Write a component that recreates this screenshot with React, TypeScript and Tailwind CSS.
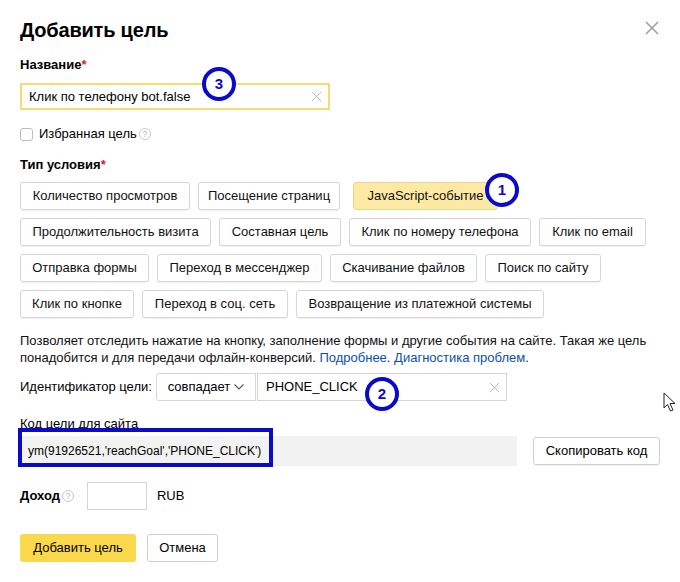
import React from "react";

const F = { fontFamily: '"Liberation Sans", Arial, sans-serif' };

function Btn({ w, children, active }: { w: number; children: React.ReactNode; active?: boolean }) {
  return (
    <div
      style={{ width: w }}
      className={
        "h-[28px] flex items-center justify-center rounded-[3px] border text-[13px] text-[#111] " +
        (active ? "bg-[#fde9a4] border-[#ead38c]" : "bg-white border-[#d6d6d6] shadow-[0_1px_1px_rgba(0,0,0,0.06)]")
      }
    >
      {children}
    </div>
  );
}

function Q() {
  return (
    <span className="inline-flex w-[12px] h-[12px] rounded-full border border-[#c8c8c8] text-[#b5b5b5] text-[9px] leading-none items-center justify-center ml-[2px]">
      ?
    </span>
  );
}

function Circle({ n, x, y }: { n: string; x: number; y: number }) {
  return (
    <div
      className="absolute w-[34px] h-[34px] rounded-full border-[4px] border-[#0a0ac8] bg-white flex items-center justify-center text-[#0a0ac8] font-bold text-[15px]"
      style={{ left: x - 17, top: y - 17 }}
    >
      {n}
    </div>
  );
}

function XIcon({ size, color, sw }: { size: number; color: string; sw: number }) {
  return (
    <svg width={size} height={size} viewBox="0 0 14 14">
      <path d="M1 1L13 13M13 1L1 13" stroke={color} strokeWidth={sw} />
    </svg>
  );
}

export default function App() {
  return (
    <div style={F} className="relative w-[680px] h-[582px] bg-white text-black overflow-hidden">
      <div className="absolute left-[645px] top-[21px]">
        <XIcon size={14} color="#a0a0a0" sw={1.6} />
      </div>

      <div className="pl-[20px] pt-[16px] flex flex-col">
        <div className="h-[28px] flex items-center text-[20px] font-bold tracking-[-0.2px]">Добавить цель</div>

        <div className="mt-[12px] h-[18px] flex items-center text-[13px] font-bold">
          Название<span className="text-[#e0202a]">*</span>
        </div>

        <div className="mt-[9px] w-[310px] h-[27px] border-2 border-[#f6dc6e] flex items-center pl-[7px] pr-[6px] text-[13px]">
          <span className="flex-1">Клик по телефону bot.false</span>
          <XIcon size={11} color="#b0b0b0" sw={1.1} />
        </div>

        <div className="mt-[15px] h-[18px] flex items-center text-[13px]">
          <span className="w-[13px] h-[13px] border border-[#bdbdbd] rounded-[3px] bg-white mr-[6px]" />
          <span>Избранная цель</span>
          <Q />
        </div>

        <div className="mt-[13px] h-[18px] flex items-center text-[13px] font-bold">
          Тип условия<span className="text-[#e0202a]">*</span>
        </div>

        <div className="mt-[8px] flex flex-col gap-[8px]">
          <div className="flex gap-[8px]">
            <Btn w={170}>Количество просмотров</Btn>
            <Btn w={142}>Посещение страниц</Btn>
            <div className="ml-[5px]">
              <Btn w={145} active>JavaScript-событие</Btn>
            </div>
          </div>
          <div className="flex gap-[8px]">
            <Btn w={191}>Продолжительность визита</Btn>
            <Btn w={122}>Составная цель</Btn>
            <Btn w={182}>Клик по номеру телефона</Btn>
            <Btn w={107}>Клик по email</Btn>
          </div>
          <div className="flex gap-[8px]">
            <Btn w={129}>Отправка формы</Btn>
            <Btn w={165}>Переход в мессенджер</Btn>
            <Btn w={147}>Скачивание файлов</Btn>
            <Btn w={116}>Поиск по сайту</Btn>
          </div>
          <div className="flex gap-[8px]">
            <Btn w={114}>Клик по кнопке</Btn>
            <Btn w={146}>Переход в соц. сеть</Btn>
            <Btn w={248}>Возвращение из платежной системы</Btn>
          </div>
        </div>

        <div className="mt-[14px] text-[13px] leading-[17px] text-[#111]">
          Позволяет отследить нажатие на кнопку, заполнение формы и другие события на сайте. Такая же цель
          <br />
          понадобится и для передачи офлайн-конверсий. <span className="text-[#0b4fb5]">Подробнее</span>.{" "}
          <span className="text-[#0b4fb5]">Диагностика проблем</span>.
        </div>

        <div className="mt-[7px] flex items-center h-[28px] text-[13px]">
          <span className="w-[136px]">Идентификатор цели:</span>
          <div className="w-[100px] h-[28px] border border-[#d6d6d6] rounded-l-[3px] flex items-center justify-center gap-[4px]">
            <span>совпадает</span>
            <svg width="10" height="6" viewBox="0 0 10 6">
              <path d="M0.5 0.5L5 5L9.5 0.5" stroke="#555" strokeWidth="1.1" fill="none" />
            </svg>
          </div>
          <div className="ml-[1px] w-[250px] h-[28px] border border-[#d6d6d6] flex items-center pl-[8px] pr-[6px]">
            <span className="flex-1">PHONE_CLICK</span>
            <XIcon size={11} color="#b0b0b0" sw={1.1} />
          </div>
        </div>

        <div className="mt-[14px] h-[18px] flex items-center text-[13px]">Код цели для сайта</div>

        <div className="mt-[3px] flex items-center">
          <div className="w-[497px] h-[30px] bg-[#f2f2f2] flex items-center pl-[8px] text-[12px]">
            ym(91926521,'reachGoal','PHONE_CLICK')
          </div>
          <div className="ml-[16px] w-[127px] h-[28px] border border-[#d0d0d0] rounded-[3px] flex items-center justify-center text-[13px] shadow-[0_1px_1px_rgba(0,0,0,0.06)]">
            Скопировать код
          </div>
        </div>

        <div className="mt-[16px] flex items-center h-[28px] text-[13px]">
          <span className="font-bold">Доход</span>
          <Q />
          <div className="ml-[13px] w-[60px] h-[28px] border border-[#d6d6d6]" />
          <span className="ml-[10px]">RUB</span>
        </div>

        <div className="mt-[24px] flex items-center gap-[11px]">
          <div className="w-[116px] h-[28px] rounded-[3px] bg-[#fcd94c] flex items-center justify-center text-[13px]">
            Добавить цель
          </div>
          <div className="w-[71px] h-[28px] rounded-[3px] border border-[#d0d0d0] flex items-center justify-center text-[13px]">
            Отмена
          </div>
        </div>
      </div>

      {/* annotations */}
      <div className="absolute left-[18px] top-[428px] w-[255px] h-[39px] border-[4px] border-[#0a0ac8]" />
      <Circle n="3" x={219} y={84} />
      <Circle n="1" x={502} y={190} />
      <Circle n="2" x={382} y={394} />

      <div className="absolute left-[663px] top-[392px]">
        <svg width="14" height="20" viewBox="0 0 14 20">
          <path d="M1 1L1 16L4.5 12.5L7.5 19L10 18L7 11.5L12 11.5Z" fill="white" stroke="#222" strokeWidth="1" strokeLinejoin="round" />
        </svg>
      </div>
    </div>
  );
}
